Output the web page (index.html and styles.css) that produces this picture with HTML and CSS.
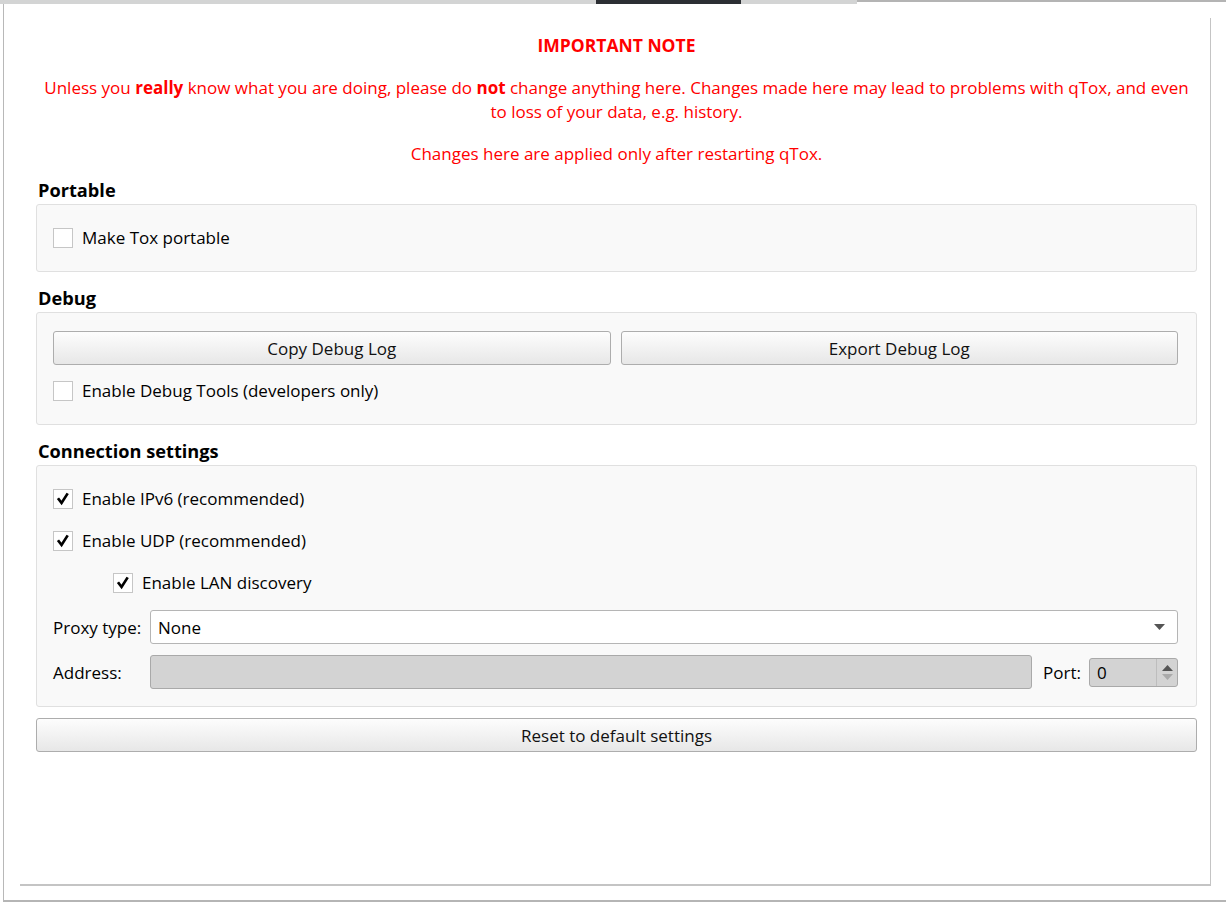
FILE: index.html
```html
<!DOCTYPE html>
<html>
<head>
<meta charset="utf-8">
<link rel="stylesheet" href="styles.css">
</head>
<body>
<div class="topbar">
  <div class="tab tab-a"></div>
  <div class="tab tab-active"></div>
  <div class="tab tab-b"></div>
  <div class="tab-rest"></div>
</div>
<div class="frame">
  <div class="scroll">
    <div class="content">
      <div class="note-title">IMPORTANT NOTE</div>
      <div class="note-text">Unless you <b>really</b> know what you are doing, please do <b>not</b> change anything here. Changes made here may lead to problems with qTox, and even<br>to loss of your data, e.g. history.</div>
      <div class="note-restart">Changes here are applied only after restarting qTox.</div>

      <div class="heading heading-first">Portable</div>
      <div class="group group-portable">
        <div class="check-row">
          <span class="checkbox"></span><span class="label">Make Tox portable</span>
        </div>
      </div>

      <div class="heading">Debug</div>
      <div class="group group-debug">
        <div class="btn-row">
          <button class="btn">Copy Debug Log</button>
          <button class="btn">Export Debug Log</button>
        </div>
        <div class="check-row">
          <span class="checkbox"></span><span class="label">Enable Debug Tools (developers only)</span>
        </div>
      </div>

      <div class="heading">Connection settings</div>
      <div class="group group-conn">
        <div class="check-row">
          <span class="checkbox checked"><svg width="20" height="20" viewBox="0 0 20 20"><path d="M5.3 10.3 L8.4 14.4 L14.4 5" fill="none" stroke="#000" stroke-width="3" stroke-linecap="square" stroke-linejoin="miter"/></svg></span><span class="label">Enable IPv6 (recommended)</span>
        </div>
        <div class="check-row">
          <span class="checkbox checked"><svg width="20" height="20" viewBox="0 0 20 20"><path d="M5.3 10.3 L8.4 14.4 L14.4 5" fill="none" stroke="#000" stroke-width="3" stroke-linecap="square" stroke-linejoin="miter"/></svg></span><span class="label">Enable UDP (recommended)</span>
        </div>
        <div class="check-row indent">
          <span class="checkbox checked"><svg width="20" height="20" viewBox="0 0 20 20"><path d="M5.3 10.3 L8.4 14.4 L14.4 5" fill="none" stroke="#000" stroke-width="3" stroke-linecap="square" stroke-linejoin="miter"/></svg></span><span class="label">Enable LAN discovery</span>
        </div>
        <div class="form-row proxy-row">
          <span class="form-label">Proxy type:</span>
          <div class="combo">
            <span>None</span>
            <svg class="combo-arrow" width="11" height="6" viewBox="0 0 11 6"><path d="M0 0 H11 L5.5 6 Z" fill="#555"/></svg>
          </div>
        </div>
        <div class="form-row addr-row">
          <span class="form-label">Address:</span>
          <div class="field-disabled"></div>
          <span class="port-label">Port:</span>
          <div class="spin">
            <span class="spin-value">0</span>
            <div class="spin-buttons">
              <svg width="11" height="6" viewBox="0 0 11 6"><path d="M0 6 H11 L5.5 0 Z" fill="#555"/></svg>
              <svg width="11" height="6" viewBox="0 0 11 6"><path d="M0 0 H11 L5.5 6 Z" fill="#aaa"/></svg>
            </div>
          </div>
        </div>
      </div>

      <button class="btn btn-reset">Reset to default settings</button>
    </div>
  </div>
</div>
</body>
</html>
```
FILE: styles.css
```css
* { box-sizing: border-box; }
html, body { margin: 0; padding: 0; background: #fff; }
body {
  width: 1226px;
  height: 903px;
  overflow: hidden;
  font-family: "Open Sans", "Noto Sans", sans-serif;
  font-size: 17px;
  color: #000;
}
.topbar { display: flex; height: 4px; align-items: flex-start; }
.tab { height: 4px; background: #d3d4d4; }
.tab-a { width: 596px; }
.tab-active { width: 145px; background: #2b2e33; }
.tab-b { width: 116px; }
.tab-rest { flex: 1; height: 2px; background: #b4b4b4; }

.frame {
  margin-left: 3px;
  height: 898px;
  border-left: 1px solid #b8b8b8;
  border-bottom: 2px solid #b5b5b5;
  padding: 14px 0 0 16px;
}
.scroll {
  width: 1191px;
  height: 868px;
  border-right: 1px solid #c4c4c4;
  border-bottom: 2px solid #c4c4c4;
}
.content {
  padding: 15px 13px 0 16px;
}
.note-title {
  color: #ff0000;
  font-weight: bold;
  text-align: center;
  line-height: 24px;
  font-size: 17.5px;
}
.note-text {
  color: #ff0000;
  text-align: center;
  line-height: 24px;
  margin-top: 19px;
  white-space: nowrap;
}
.note-text b { font-weight: bold; }
.note-restart {
  color: #ff0000;
  text-align: center;
  line-height: 24px;
  margin-top: 18px;
}
.heading {
  font-weight: bold;
  font-size: 18.2px;
  line-height: 24px;
  margin-top: 14px;
  margin-bottom: 2px;
  padding-left: 2px;
}
.heading-first { margin-top: 12px; margin-bottom: 2px; }
.group {
  background: #f9f9f9;
  border: 1px solid #e0e0e0;
  border-radius: 3px;
  padding: 0 18px 0 16px;
  display: flex;
  flex-direction: column;
}
.group-portable { padding-top: 21px; padding-bottom: 21px; }
.group-debug { padding-top: 18px; padding-bottom: 21px; gap: 14px; }
.group-conn { padding-top: 21px; padding-bottom: 17px; }

.check-row {
  display: flex;
  align-items: center;
  height: 24px;
}
.check-row.indent { padding-left: 60px; }
.group-conn .check-row + .check-row { margin-top: 18px; }
.checkbox {
  width: 20px;
  height: 20px;
  border: 1px solid #c6c6c6;
  background: #fff;
  margin-right: 9px;
  display: flex;
  align-items: center;
  justify-content: center;
  flex: none;
}
.checkbox svg { display: block; }
.label { line-height: 24px; }

.btn-row { display: flex; gap: 10px; }
.btn {
  font-family: inherit;
  font-size: 17px;
  color: #111;
  height: 34px;
  border: 1px solid #adadad;
  border-radius: 3px;
  background: linear-gradient(#fdfdfd, #e7e7e7);
  padding: 0;
}
.btn-row .btn { flex: 1; }
.btn-reset {
  display: block;
  width: 1161px;
  margin-top: 11px;
}

.form-row { display: flex; align-items: center; height: 34px; }
.proxy-row { margin-top: 15px; }
.addr-row { margin-top: 11px; }
.form-label { width: 97px; flex: none; }
.combo {
  flex: 1;
  height: 34px;
  background: #fff;
  border: 1px solid #b5b5b5;
  border-radius: 3px;
  display: flex;
  align-items: center;
  justify-content: space-between;
  padding: 0 12px 0 7px;
}
.combo-arrow { display: block; }
.field-disabled {
  flex: 1;
  height: 34px;
  background: #d3d3d3;
  border: 1px solid #a9a9a9;
  border-radius: 3px;
}
.port-label { margin-left: 11px; width: 46px; flex: none; }
.spin {
  width: 89px;
  height: 29px;
  background: #d3d3d3;
  border: 1px solid #a9a9a9;
  border-radius: 3px;
  display: flex;
  align-items: center;
  flex: none;
}
.spin-value { flex: 1; padding-left: 7px; }
.spin-buttons {
  width: 21px;
  height: 100%;
  border-left: 1px solid #bdbdbd;
  display: flex;
  flex-direction: column;
  align-items: center;
  justify-content: center;
  gap: 3px;
}
.spin-buttons svg { display: block; }
```
